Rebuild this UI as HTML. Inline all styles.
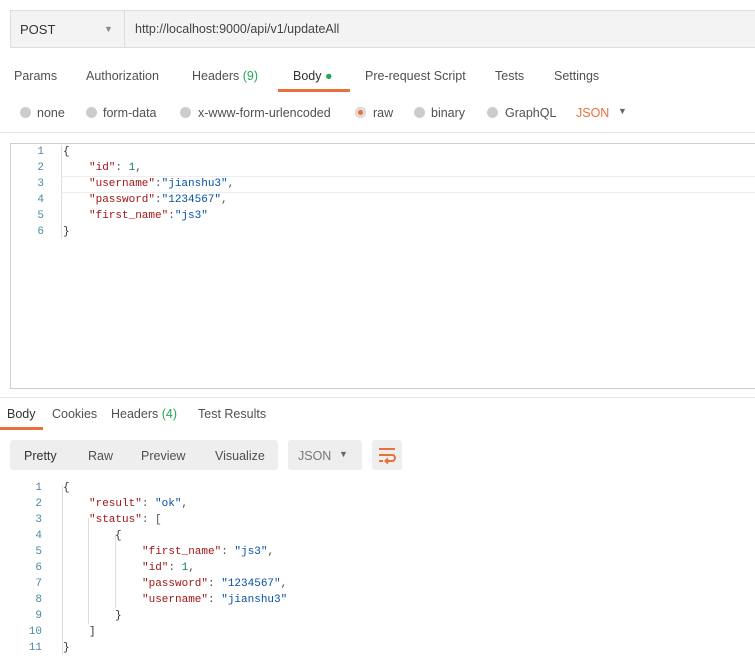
<!DOCTYPE html><html><head><style>
body{margin:0;width:755px;height:662px;background:#fff;font-family:"Liberation Sans",sans-serif;font-size:12.5px;color:#505050;position:relative;overflow:hidden}
.a{position:absolute;white-space:pre}
.mono{font-family:"Liberation Mono",monospace;font-size:11px}
.k{color:#a31515}.s{color:#0451a5}.n{color:#098658}.p{color:#333}
.ln{position:absolute;width:32px;text-align:right;color:#4a8aa5}
.radio{position:absolute;width:11px;height:11px;border-radius:50%;background:#ccc}
</style></head><body>
<div class="a" style="left:10px;top:10px;width:745px;height:38px;background:#f3f3f3;border:1px solid #ddd;border-right:none;box-sizing:border-box"></div>
<div class="a" style="left:124px;top:10px;width:1px;height:38px;background:#ddd"></div>
<div class="a" style="left:20px;top:22px;color:#333;font-size:13px">POST</div>
<div class="a" style="left:104px;top:24px;font-size:9px;color:#888">▼</div>
<div class="a" style="left:135px;top:22px;color:#444">http://localhost:9000/api/v1/updateAll</div>

<div class="a" style="left:14px;top:69px">Params</div>
<div class="a" style="left:86px;top:69px">Authorization</div>
<div class="a" style="left:192px;top:69px">Headers <span style="color:#26a65b">(9)</span></div>
<div class="a" style="left:293px;top:69px;color:#333">Body <span style="color:#26a65b">●</span></div>
<div class="a" style="left:278px;top:89px;width:72px;height:3px;background:#e8703a"></div>
<div class="a" style="left:365px;top:69px">Pre-request Script</div>
<div class="a" style="left:495px;top:69px">Tests</div>
<div class="a" style="left:554px;top:69px">Settings</div>

<div class="radio" style="left:20px;top:107px"></div><div class="a" style="left:37px;top:106px">none</div>
<div class="radio" style="left:86px;top:107px"></div><div class="a" style="left:103px;top:106px">form-data</div>
<div class="radio" style="left:180px;top:107px"></div><div class="a" style="left:198px;top:106px">x-www-form-urlencoded</div>
<div class="radio" style="left:355px;top:107px;box-shadow:inset 0 0 0 3px #ddd;background:#e8703a"></div><div class="a" style="left:373px;top:106px">raw</div>
<div class="radio" style="left:414px;top:107px"></div><div class="a" style="left:431px;top:106px">binary</div>
<div class="radio" style="left:487px;top:107px"></div><div class="a" style="left:505px;top:106px">GraphQL</div>
<div class="a" style="left:576px;top:106px;color:#e8703a">JSON</div>
<div class="a" style="left:618px;top:106px;font-size:9px;color:#666">▼</div>
<div class="a" style="left:0;top:132px;width:755px;height:1px;background:#e6e6e6"></div>

<div class="a" style="left:10px;top:143px;width:746px;height:246px;border:1px solid #d0d0d0;box-sizing:border-box"></div>
<div class="a" style="left:62px;top:176px;width:693px;height:15px;border-top:1px solid #eee;border-bottom:1px solid #eee"></div>
<div class="a" style="left:61px;top:145px;width:1px;height:94px;background:#ddd"></div>
<div class="mono">
<div class="ln" style="left:12px;top:146px">1</div><div class="a p" style="left:63px;top:146px">{</div>
<div class="ln" style="left:12px;top:162px">2</div><div class="a" style="left:89px;top:162px"><span class="k">"id"</span>: <span class="n">1</span>,</div>
<div class="ln" style="left:12px;top:178px">3</div><div class="a" style="left:89px;top:178px"><span class="k">"username"</span>:<span class="s">"jianshu3"</span>,</div>
<div class="ln" style="left:12px;top:194px">4</div><div class="a" style="left:89px;top:194px"><span class="k">"password"</span>:<span class="s">"1234567"</span>,</div>
<div class="ln" style="left:12px;top:210px">5</div><div class="a" style="left:89px;top:210px"><span class="k">"first_name"</span>:<span class="s">"js3"</span></div>
<div class="ln" style="left:12px;top:226px">6</div><div class="a p" style="left:63px;top:226px">}</div>
</div>
<div class="a" style="left:0;top:397px;width:755px;height:1px;background:#e6e6e6"></div>

<div class="a" style="left:7px;top:407px;color:#333">Body</div>
<div class="a" style="left:0;top:427px;width:43px;height:3px;background:#e8703a"></div>
<div class="a" style="left:52px;top:407px">Cookies</div>
<div class="a" style="left:111px;top:407px">Headers <span style="color:#26a65b">(4)</span></div>
<div class="a" style="left:198px;top:407px">Test Results</div>

<div class="a" style="left:10px;top:440px;width:268px;height:30px;background:#eee;border-radius:3px"></div>
<div class="a" style="left:24px;top:449px;color:#333">Pretty</div>
<div class="a" style="left:88px;top:449px">Raw</div>
<div class="a" style="left:141px;top:449px">Preview</div>
<div class="a" style="left:215px;top:449px">Visualize</div>
<div class="a" style="left:288px;top:440px;width:74px;height:30px;background:#eee;border-radius:3px"></div>
<div class="a" style="left:298px;top:449px;color:#777">JSON</div>
<div class="a" style="left:339px;top:449px;font-size:9px;color:#666">▼</div>
<div class="a" style="left:372px;top:440px;width:30px;height:30px;background:#eee;border-radius:3px"></div>
<svg class="a" style="left:377px;top:446px" width="20" height="18" viewBox="0 0 20 18"><g stroke="#e8703a" stroke-width="2" fill="none"><path d="M2 3H18M2 9H15a3 3 0 0 1 0 6H9M2 15H6"/><path d="M11 12.5L8.5 15L11 17.5"/></g></svg>

<div class="a" style="left:62px;top:486px;width:1px;height:168px;background:#ddd"></div>
<div class="a" style="left:88px;top:518px;width:1px;height:106px;background:#ddd"></div>
<div class="a" style="left:115px;top:534px;width:1px;height:74px;background:#ddd"></div>
<div class="mono">
<div class="ln" style="left:10px;top:482px">1</div><div class="a p" style="left:63px;top:482px">{</div>
<div class="ln" style="left:10px;top:498px">2</div><div class="a" style="left:89px;top:498px"><span class="k">"result"</span>: <span class="s">"ok"</span>,</div>
<div class="ln" style="left:10px;top:514px">3</div><div class="a" style="left:89px;top:514px"><span class="k">"status"</span>: [</div>
<div class="ln" style="left:10px;top:530px">4</div><div class="a p" style="left:115px;top:530px">{</div>
<div class="ln" style="left:10px;top:546px">5</div><div class="a" style="left:142px;top:546px"><span class="k">"first_name"</span>: <span class="s">"js3"</span>,</div>
<div class="ln" style="left:10px;top:562px">6</div><div class="a" style="left:142px;top:562px"><span class="k">"id"</span>: <span class="n">1</span>,</div>
<div class="ln" style="left:10px;top:578px">7</div><div class="a" style="left:142px;top:578px"><span class="k">"password"</span>: <span class="s">"1234567"</span>,</div>
<div class="ln" style="left:10px;top:594px">8</div><div class="a" style="left:142px;top:594px"><span class="k">"username"</span>: <span class="s">"jianshu3"</span></div>
<div class="ln" style="left:10px;top:610px">9</div><div class="a p" style="left:115px;top:610px">}</div>
<div class="ln" style="left:10px;top:626px">10</div><div class="a p" style="left:89px;top:626px">]</div>
<div class="ln" style="left:10px;top:642px">11</div><div class="a p" style="left:63px;top:642px">}</div>
</div>
</body></html>
